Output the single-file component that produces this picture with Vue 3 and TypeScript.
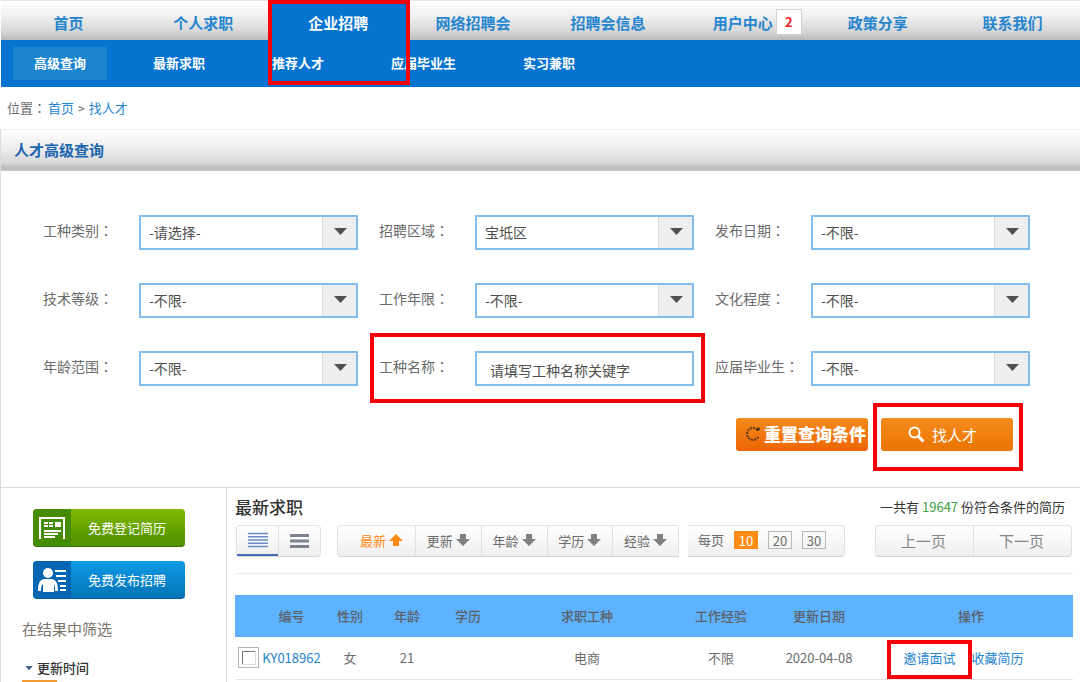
<script setup lang="ts">
import { ref } from 'vue'

interface NavItem {
  label: string
  badge?: number
  active?: boolean
}

interface Field {
  id: string
  label: string
  type: 'select' | 'text'
  value: string
}

interface Resume {
  id: string
  gender: string
  age: number
  education: string
  job: string
  experience: string
  updated: string
}

const navItems: NavItem[] = [
  { label: '首页' },
  { label: '个人求职' },
  { label: '企业招聘', active: true },
  { label: '网络招聘会' },
  { label: '招聘会信息' },
  { label: '用户中心', badge: 2 },
  { label: '政策分享' },
  { label: '联系我们' },
]

const subItems = ['高级查询', '最新求职', '推荐人才', '应届毕业生', '实习兼职']

const fields = ref<Field[]>([
  { id: 'category', label: '工种类别', type: 'select', value: '-请选择-' },
  { id: 'region', label: '招聘区域', type: 'select', value: '宝坻区' },
  { id: 'published', label: '发布日期', type: 'select', value: '-不限-' },
  { id: 'level', label: '技术等级', type: 'select', value: '-不限-' },
  { id: 'years', label: '工作年限', type: 'select', value: '-不限-' },
  { id: 'education', label: '文化程度', type: 'select', value: '-不限-' },
  { id: 'age', label: '年龄范围', type: 'select', value: '-不限-' },
  { id: 'keyword', label: '工种名称', type: 'text', value: '请填写工种名称关键字' },
  { id: 'graduate', label: '应届毕业生', type: 'select', value: '-不限-' },
])

const sorts = ['最新', '更新', '年龄', '学历', '经验']
const activeSort = ref('最新')
const pageSizes = [10, 20, 30]
const pageSize = ref(10)
const columns = ['编号', '性别', '年龄', '学历', '求职工种', '工作经验', '更新日期', '操作']

const resumes: Resume[] = [
  { id: 'KY018962', gender: '女', age: 21, education: '', job: '电商', experience: '不限', updated: '2020-04-08' },
]
</script>

<template>
  <div class="page">
    <nav class="main-nav">
      <div v-for="item in navItems" :key="item.label" class="nav-cell" :class="{ active: item.active }">
        <a href="#">{{ item.label }}</a>
        <span v-if="item.badge" class="badge">{{ item.badge }}</span>
        <span v-if="item.active" class="mark mark-nav"></span>
      </div>
    </nav>
    <nav class="sub-nav">
      <a v-for="(item, i) in subItems" :key="item" href="#" :class="{ current: i === 0 }">{{ item }}</a>
    </nav>

    <div class="crumbs">
      <span>位置<span class="colon">：</span></span>
      <a href="#">首页</a>
      <span class="sep">&gt;</span>
      <a href="#">找人才</a>
    </div>

    <section class="panel">
      <h1>人才高级查询</h1>
      <form class="search" @submit.prevent>
        <div class="fields">
          <div v-for="f in fields" :key="f.id" class="field">
            <label :for="f.id">{{ f.label }}<span class="colon">：</span></label>
            <div v-if="f.type === 'select'" class="select-wrap">
              <select :id="f.id" v-model="f.value">
                <option>{{ f.value }}</option>
              </select>
            </div>
            <input v-else :id="f.id" v-model="f.value" type="text">
            <span v-if="f.type === 'text'" class="mark mark-field"></span>
          </div>
        </div>
        <div class="actions">
          <button type="button" class="reset">
            <svg width="16" height="16" viewBox="0 0 16 16" fill="none" stroke="#5b3a12" stroke-width="2">
              <path d="M12.500 3.800A6 6 0 1 0 13.500 10.500" stroke-dasharray="2 1" />
              <path d="M10.500 4.500h4V1z" fill="#2d2216" stroke="none" />
            </svg>
            重置查询条件
          </button>
          <div class="find-wrap">
            <button type="submit" class="find">
              <svg width="17" height="17" viewBox="0 0 17 17" fill="none" stroke="#fff">
                <circle cx="6.500" cy="6.500" r="5" stroke-width="2" />
                <path d="M10 10l5.500 5.500" stroke-width="3" />
              </svg>
              找人才
            </button>
            <span class="mark mark-find"></span>
          </div>
        </div>
      </form>

      <div class="results">
        <aside>
          <button type="button" class="side-btn green">
            <span class="side-icon">
              <svg width="28" height="24" viewBox="0 0 28 24" fill="#fff">
                <path d="M1 1h26v22h-2V3H3v20H1z" />
                <path d="M6 6h4v2H6zM11 6h4v2h-4zM6 9h4v2H6zM11 9h4v2h-4zM17 6h6v5h-6zM6 14h17v2H6zM6 17h14v2H6zM6 20h11v2H6z" />
              </svg>
            </span>
            <span class="side-text">免费登记简历</span>
          </button>
          <button type="button" class="side-btn blue">
            <span class="side-icon">
              <svg width="28" height="24" viewBox="0 0 28 24" fill="#fff">
                <circle cx="10" cy="5" r="5" />
                <path d="M0 23c0-8 2-12 7-12h6c5 0 7 4 7 12h-3c0-3 0-5-1-7v8H5v-8c-2 2-2 4-2 7z" />
                <path d="M17 2h11v2H17zM18 7h10v2H18zM20 12h8v2h-8zM22 17h6v2h-6zM22 21h6v2h-6z" />
              </svg>
            </span>
            <span class="side-text">免费发布招聘</span>
          </button>
          <h2>在结果中筛选</h2>
          <h3>更新时间</h3>
          <div class="underline"></div>
        </aside>

        <main>
          <div class="title-row">
            <h2>最新求职</h2>
            <p>一共有 <span>19647</span> 份符合条件的简历</p>
          </div>

          <div class="toolbar">
            <div class="bar views">
              <button type="button" class="on" aria-label="列表">
                <svg width="20" height="16" viewBox="0 0 20 16" stroke="#6b8cc4" stroke-width="1.500">
                  <path d="M0 1.500h20M0 4.800h20M0 8h20M0 11.300h20M0 14.500h20" />
                </svg>
              </button>
              <button type="button" aria-label="详细">
                <svg width="19" height="16" viewBox="0 0 19 16" stroke="#7c8290" stroke-width="3">
                  <path d="M0 2.500h19M0 8h19M0 13.500h19" />
                </svg>
              </button>
            </div>
            <div class="bar sorts">
              <button v-for="s in sorts" :key="s" type="button" :class="{ on: s === activeSort }" @click="activeSort = s">
                {{ s }}
                <svg width="14" height="12" viewBox="0 0 14 12" fill="currentColor">
                  <path v-if="s === activeSort" d="M7 0l7 7h-4v5H4V7H0z" />
                  <path v-else d="M7 12L0 5h4V0h6v5h4z" />
                </svg>
              </button>
            </div>
            <div class="bar sizes">
              <span>每页</span>
              <button v-for="n in pageSizes" :key="n" type="button" :class="{ on: n === pageSize }" @click="pageSize = n">{{ n }}</button>
            </div>
            <div class="bar pager">
              <button type="button">上一页</button>
              <button type="button">下一页</button>
            </div>
          </div>

          <table>
            <colgroup>
              <col class="c-check"><col class="c-id"><col class="c-sex"><col class="c-age"><col class="c-edu">
              <col><col class="c-exp"><col class="c-date"><col class="c-ops">
            </colgroup>
            <thead>
              <tr>
                <th></th>
                <th v-for="c in columns" :key="c">{{ c }}</th>
              </tr>
            </thead>
            <tbody>
              <tr v-for="r in resumes" :key="r.id">
                <td><input type="checkbox" :aria-label="r.id"></td>
                <td><a href="#">{{ r.id }}</a></td>
                <td>{{ r.gender }}</td>
                <td>{{ r.age }}</td>
                <td>{{ r.education }}</td>
                <td>{{ r.job }}</td>
                <td>{{ r.experience }}</td>
                <td>{{ r.updated }}</td>
                <td class="ops">
                  <span class="invite"><a href="#">邀请面试</a><span class="mark mark-invite"></span></span>
                  <a href="#">收藏简历</a>
                </td>
              </tr>
            </tbody>
          </table>
        </main>
      </div>
    </section>
  </div>
</template>

<style>
body {
  margin: 0;
  background: #fff;
}
</style>

<style scoped>
.page {
  font-family: "Noto Sans CJK SC", sans-serif;
  font-size: 13px;
  line-height: 20px;
  color: #6b6b6b;
}
.page *, .page *::before, .page *::after { box-sizing: border-box; }
a { color: #2585cf; text-decoration: none; }
h1, h2, h3, p { margin: 0; }
button, input, select { font-family: inherit; font-size: 13px; color: inherit; margin: 0; }
button { border: 0; padding: 0; background: none; cursor: pointer; }
.colon { font-family: "Noto Sans CJK TC", sans-serif; }

.mark {
  position: absolute;
  border: 4px solid #f8000a;
  pointer-events: none;
  z-index: 2;
}

.main-nav {
  display: grid;
  grid-template-columns: repeat(8, 1fr);
  height: 40px;
  margin-left: 1px;
  border-top: 1px solid #e4e4e4;
  background: linear-gradient(#fff, #efefef 40%, #d9d9d9 75%, #b9bbbd);
}
.nav-cell {
  position: relative;
  display: flex;
  align-items: center;
  justify-content: center;
  padding-top: 5px;
  font-size: 15px;
  font-weight: 700;
}
.nav-cell.active { background: #0573d0; }
.nav-cell.active a { color: #fff; }
.mark-nav { left: -3px; right: -4px; top: -1px; height: 85px; }
.badge {
  position: absolute;
  left: calc(50% + 33px);
  top: 8px;
  width: 26px;
  height: 26px;
  border: 1px solid #d0d0d0;
  background: #fff;
  color: #ee1c25;
  font-size: 13px;
  line-height: 24px;
  text-align: center;
}

.sub-nav {
  display: flex;
  align-items: center;
  gap: 25px;
  height: 47px;
  margin-left: 1px;
  padding-left: 12px;
  background: #0573d0;
}
.sub-nav a {
  padding: 0 21px 2px;
  color: #fff;
  font-weight: 700;
  line-height: 31px;
}
.sub-nav .current { background: #1b84cf; }

.crumbs {
  display: flex;
  align-items: center;
  height: 42px;
  padding-left: 7px;
}
.sep { padding: 0 4px; font-size: 12px; }
.crumbs > span:first-child { margin-right: 2px; }

.panel { border-left: 1px solid #dcdcdc; }
.panel h1 {
  height: 42px;
  padding-left: 13px;
  border-top: 1px solid #f0f0f0;
  background: linear-gradient(#fff, #ededed 45%, #d8d8d8 80%, #bcbcbc 92%, #c8c8c8);
  color: #1c66b0;
  font-size: 15px;
  line-height: 39px;
}

.search { padding: 44px 29px 36px 42px; }
.fields {
  display: grid;
  grid-template-columns: repeat(3, 1fr);
  row-gap: 33px;
}
.field {
  position: relative;
  display: flex;
  height: 35px;
  padding-right: 21px;
}
.field label {
  width: 96px;
  flex: none;
  font-size: 14px;
  line-height: 30px;
}
.select-wrap { position: relative; flex: 1; }
.select-wrap::after {
  content: "";
  position: absolute;
  right: 11px;
  top: 13px;
  width: 13px;
  height: 7px;
  background: #505050;
  clip-path: polygon(0 0, 100% 0, 50% 100%);
  pointer-events: none;
}
.field select, .field input {
  width: 100%;
  height: 35px;
  border: 2px solid #82bdf0;
  border-radius: 0;
  background: #fff;
  color: #4e4e4e;
  font-size: 14px;
  outline: 0;
}
.field select {
  appearance: none;
  padding: 0 40px 2px 8px;
  background: linear-gradient(90deg, #dedede 1px, #eee 1px) right / 34px 100% no-repeat #fff;
}
.field input { flex: 1; width: 0; padding: 2px 13px 0; }
.mark-field { left: -9px; right: 10px; top: -18px; height: 70px; }

.actions {
  display: flex;
  justify-content: flex-end;
  gap: 13px;
  margin-top: 32px;
  padding-right: 38px;
}
.actions button {
  display: flex;
  align-items: center;
  width: 132px;
  height: 33px;
  border-radius: 3px;
  color: #fff;
  white-space: nowrap;
}
.actions .reset {
  gap: 3px;
  padding: 0 0 2px 9px;
  background: linear-gradient(#f58a1c, #ec6503);
  font-size: 17px;
  font-weight: 900;
}
.actions .find {
  gap: 7px;
  padding-left: 27px;
  background: linear-gradient(#f58b1e, #ea7400);
  font-size: 15px;
}
.find-wrap { position: relative; }
.mark-find { left: -8px; right: -10px; top: -15px; bottom: -20px; }

.results {
  display: flex;
  border-top: 1px solid #dcdcdc;
}
aside {
  width: 225px;
  flex: none;
  padding: 21px 0 0 21px;
}
.side-btn {
  display: flex;
  align-items: center;
  width: 152px;
  height: 38px;
  margin: 0 0 14px 11px;
  border-radius: 4px;
  overflow: hidden;
  color: #fff;
}
.green { background: linear-gradient(#83b800, #4d9000); border-bottom: 1px solid #3c7400; }
.blue { background: linear-gradient(#0e9ae4, #0474b8); border-bottom: 1px solid #02609c; }
.side-icon {
  display: flex;
  align-items: center;
  justify-content: center;
  width: 38px;
  height: 100%;
}
.green .side-icon { background: #458c04; }
.blue .side-icon { background: #0567b4; }
.side-text { flex: 1; padding: 0 2px 1px 0; text-align: center; }
aside h2 {
  margin-top: 20px;
  color: #79736c;
  font-size: 15px;
  font-weight: 400;
}
aside h3 {
  display: flex;
  align-items: center;
  gap: 4px;
  margin: 19px 0 2px 3px;
  color: #333;
  font-size: 13px;
  font-weight: 500;
}
aside h3::before {
  content: "";
  width: 8px;
  height: 5px;
  background: #40658a;
  clip-path: polygon(0 0, 100% 0, 50% 100%);
}
.underline { width: 35px; height: 2px; background: #f39a35; }

main {
  flex: 1;
  min-width: 0;
  padding: 0 7px 0 8px;
  border-left: 1px solid #dcdcdc;
}
.title-row {
  display: flex;
  align-items: center;
  justify-content: space-between;
  height: 37px;
  padding-right: 8px;
}
.title-row h2 { color: #333; font-size: 17px; font-weight: 500; }
.title-row p { color: #333; }
.title-row p span { color: #3fa03f; }

.toolbar {
  display: flex;
  padding: 0 1px 16px;
  border-bottom: 1px solid #ececec;
}
.bar {
  display: flex;
  height: 32px;
  border: 1px solid #e2e2e2;
  border-bottom-color: #d2d2d2;
  border-radius: 4px;
  background: linear-gradient(#fff, #efefef);
}
.bar button { display: flex; align-items: center; justify-content: center; }
.views { width: 85px; margin-right: 16px; }
.views button { flex: 1; }
.views button + button, .sorts button + button, .pager button + button { border-left: 1px solid #e2e2e2; }
.views .on { border-bottom: 2px solid #4a70b8; }
.sorts { width: 342px; margin-right: 9px; border-radius: 4px 0 0 4px; }
.sorts button { flex: 1; gap: 3px; padding-bottom: 2px; }
.sorts button:first-child { padding-left: 10px; flex: none; width: 77px; }
.sorts svg { color: #808080; }
.sorts .on, .sorts .on svg { color: #ff8a14; }
.sizes {
  align-items: center;
  width: 157px;
  padding: 0 0 2px 10px;
  border-left: 0;
  border-radius: 0 4px 4px 0;
}
.sizes button {
  width: 24px;
  height: 18px;
  margin-left: 10px;
  border: 1px solid #b8b8b8;
}
.sizes .on { border-color: #ff8a14; background: #ff8a14; color: #fff; }
.pager { width: 197px; margin-left: auto; }
.pager button { flex: 1; padding: 0 2px 2px 0; color: #858585; font-size: 15px; }

table {
  width: 100%;
  margin-top: 21px;
  border-collapse: collapse;
  table-layout: fixed;
}
.c-check { width: 27px; }
.c-id { width: 59px; }
.c-sex { width: 58px; }
.c-age { width: 56px; }
.c-edu { width: 66px; }
.c-exp { width: 96px; }
.c-date { width: 100px; }
.c-ops { width: 204px; }
th, td { height: 42px; padding: 0; text-align: center; }
th { background: #5db3ff; color: #5c6168; font-weight: 500; }
tbody tr { border-bottom: 1px solid #e2e2e2; }
td input {
  display: block;
  appearance: none;
  width: 21px;
  height: 21px;
  margin-left: 3px;
  border: 1px solid #b4b4b4;
  background:
    linear-gradient(#777, #777) 3px 3px / 13px 1px no-repeat,
    linear-gradient(#777, #777) 3px 3px / 1px 13px no-repeat,
    linear-gradient(#ddd, #ddd) 3px 16px / 14px 1px no-repeat,
    linear-gradient(#ddd, #ddd) 16px 3px / 1px 14px no-repeat,
    #fff;
}
td.ops { padding-right: 15px; }
.invite { position: relative; display: inline-block; margin-right: 16px; }
.mark-invite { left: -16px; right: -16px; top: -8px; height: 39px; }
</style>
